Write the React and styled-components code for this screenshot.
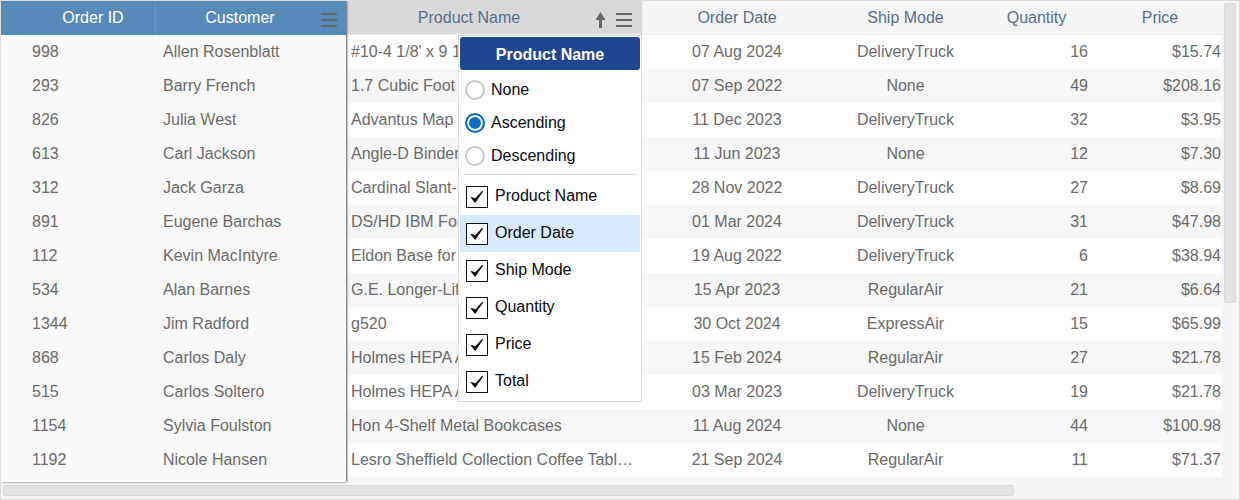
import React from 'react';
import styled, { createGlobalStyle } from 'styled-components';

const GlobalStyle = createGlobalStyle`
  body {
    margin: 0;
    font-family: 'Liberation Sans', Arial, sans-serif;
  }
`;

const Frame = styled.div`
  position: relative;
  box-sizing: border-box;
  width: 1240px;
  height: 500px;
  border: 1px solid #dcdcdc;
  background: #f5f5f5;
  display: flex;
  flex-direction: column;
  overflow: hidden;
  font-size: 16px;
`;

const Body = styled.div`
  display: flex;
  height: 481px;
`;

const FrozenPane = styled.div`
  position: relative;
  z-index: 2;
  width: 345px;
  flex: none;
  background: #fafafa;
  box-shadow: 1px 0 2px rgba(0, 0, 0, 0.65);
`;

const CenterPane = styled.div`
  width: 875px;
  margin-left: 1px;
  flex: none;
  overflow: hidden;
`;

const HeaderRow = styled.div`
  display: flex;
  height: 34px;
  background: ${(p) => (p.$frozen ? '#568ab8' : '#f5f5f5')};
`;

const HeaderCell = styled.div`
  position: relative;
  box-sizing: border-box;
  flex: none;
  width: ${(p) => p.$w}px;
  height: 34px;
  line-height: 33px;
  text-align: center;
  padding-left: ${(p) => p.$pl || 0}px;
  padding-right: ${(p) => p.$pr || 0}px;
  color: ${(p) => (p.$frozen ? '#ffffff' : '#566f91')};
  background: ${(p) => (p.$active ? '#d9d9d9' : 'transparent')};
  border-right: ${(p) => (p.$divider ? '1px solid #6a97c0' : 'none')};
  border-bottom: ${(p) => (p.$frozen ? 'none' : '1px solid #ececec')};
`;

const MenuIcon = styled.span`
  position: absolute;
  right: ${(p) => p.$right}px;
  top: 12px;
  width: 16px;
  height: 14px;
  border-top: 2px solid #666;
  border-bottom: 2px solid #666;
  box-sizing: border-box;
  &::after {
    content: '';
    position: absolute;
    left: 0;
    right: 0;
    top: 4px;
    height: 2px;
    background: #666;
  }
`;

const SortIcon = styled.svg`
  position: absolute;
  right: 36px;
  top: 11px;
  width: 11px;
  height: 16px;
`;

const Row = styled.div`
  display: flex;
  height: 34px;
  background: ${(p) => p.$bg};
`;

const Cell = styled.div`
  box-sizing: border-box;
  flex: none;
  width: ${(p) => p.$w}px;
  line-height: 33px;
  text-align: ${(p) => p.$align || 'left'};
  padding-left: ${(p) => p.$pl || 0}px;
  padding-right: ${(p) => p.$pr || 0}px;
  color: #6b6b6b;
  white-space: nowrap;
  overflow: hidden;
  text-overflow: ellipsis;
`;

const VerticalTrack = styled.div`
  flex: 1;
  padding: 2px 3px 0 2px;
`;

const VerticalThumb = styled.div`
  height: 300px;
  background: #e3e3e3;
  border: 1px solid #d8d8d8;
  border-radius: 2px;
  box-sizing: border-box;
`;

const HorizontalTrack = styled.div`
  flex: 1;
  padding: 3px 2px;
`;

const HorizontalThumb = styled.div`
  width: 1011px;
  height: 11px;
  background: #e3e3e3;
  border: 1px solid #d8d8d8;
  border-radius: 2px;
  box-sizing: border-box;
`;

const Popup = styled.div`
  position: absolute;
  z-index: 3;
  left: 457px;
  top: 34px;
  box-sizing: border-box;
  width: 184px;
  height: 367px;
  background: #ffffff;
  border: 1px solid #dddddd;
  padding: 1px;
  color: #0a0a14;
`;

const PopupTitle = styled.div`
  height: 33px;
  line-height: 35px;
  background: #1f4690;
  border-radius: 3px;
  color: #ffffff;
  font-weight: bold;
  text-align: center;
`;

const RadioList = styled.div`
  padding-top: 3px;
`;

const RadioItem = styled.div`
  display: flex;
  align-items: center;
  height: 33px;
  padding-left: 5px;
`;

const RadioMark = styled.span`
  box-sizing: border-box;
  width: 20px;
  height: 20px;
  margin-right: 6px;
  border-radius: 50%;
  border: 2px solid ${(p) => (p.$on ? '#0a6cc4' : '#c8c8c8')};
  background: ${(p) => (p.$on ? '#0a6cc4' : '#ffffff')};
  box-shadow: ${(p) => (p.$on ? 'inset 0 0 0 2px #ffffff' : 'none')};
`;

const Divider = styled.div`
  height: 1px;
  margin: 2px 3px 3px 3px;
  background: #dddddd;
`;

const CheckItem = styled.div`
  display: flex;
  align-items: center;
  height: 37px;
  padding-left: 6px;
  background: ${(p) => (p.$hover ? '#d8eafb' : 'transparent')};
`;

const CheckBox = styled.span`
  box-sizing: border-box;
  flex: none;
  display: flex;
  align-items: center;
  justify-content: center;
  width: 22px;
  height: 22px;
  margin-top: 1px;
  margin-right: 7px;
  border: 1.5px solid #111;
  background: #ffffff;
`;

const CheckLabel = styled.span`
  margin-top: -2px;
`;

const rows = [
  ['998', 'Allen Rosenblatt', "#10-4 1/8' x 9 1/2' Premium Diagonal Seam Envelopes", '07 Aug 2024', 'DeliveryTruck', 16, '$15.74'],
  ['293', 'Barry French', '1.7 Cubic Foot Compact Office Refrigerators', '07 Sep 2022', 'None', 49, '$208.16'],
  ['826', 'Julia West', 'Advantus Map Pennant Flags and Round Head Tacks', '11 Dec 2023', 'DeliveryTruck', 32, '$3.95'],
  ['613', 'Carl Jackson', 'Angle-D Binders with Locking Rings, Label Holders', '11 Jun 2023', 'None', 12, '$7.30'],
  ['312', 'Jack Garza', 'Cardinal Slant-D Ring Binder, Heavy Gauge Vinyl', '28 Nov 2022', 'DeliveryTruck', 27, '$8.69'],
  ['891', 'Eugene Barchas', 'DS/HD IBM Formatted Diskettes, 200/Pack', '01 Mar 2024', 'DeliveryTruck', 31, '$47.98'],
  ['112', 'Kevin MacIntyre', 'Eldon Base for stackable storage shelf, platinum', '19 Aug 2022', 'DeliveryTruck', 6, '$38.94'],
  ['534', 'Alan Barnes', 'G.E. Longer-Life Indoor Recessed Floodlight Bulbs', '15 Apr 2023', 'RegularAir', 21, '$6.64'],
  ['1344', 'Jim Radford', 'g520', '30 Oct 2024', 'ExpressAir', 15, '$65.99'],
  ['868', 'Carlos Daly', 'Holmes HEPA Air Purifier', '15 Feb 2024', 'RegularAir', 27, '$21.78'],
  ['515', 'Carlos Soltero', 'Holmes HEPA Air Purifier', '03 Mar 2023', 'DeliveryTruck', 19, '$21.78'],
  ['1154', 'Sylvia Foulston', 'Hon 4-Shelf Metal Bookcases', '11 Aug 2024', 'None', 44, '$100.98'],
  ['1192', 'Nicole Hansen', 'Lesro Sheffield Collection Coffee Table, End Table', '21 Sep 2024', 'RegularAir', 11, '$71.37'],
];

const sortOptions = [
  { label: 'None' },
  { label: 'Ascending', on: true },
  { label: 'Descending' },
];

const columnOptions = [
  { label: 'Product Name' },
  { label: 'Order Date', hover: true },
  { label: 'Ship Mode' },
  { label: 'Quantity' },
  { label: 'Price' },
  { label: 'Total' },
];

const Check = () => (
  <svg width="16" height="16" viewBox="0 0 16 16">
    <path d="M2.5 8.5 L6.2 13 L13.5 2.5 L6.4 10 Z" fill="#111" stroke="#111" strokeWidth="1.2" strokeLinejoin="round" />
  </svg>
);

const App = () => {
  return (
    <Frame>
      <GlobalStyle />
      <Body>
        <FrozenPane>
          <HeaderRow $frozen>
            <HeaderCell $frozen $divider $w={155} $pl={30}>Order ID</HeaderCell>
            <HeaderCell $frozen $w={190} $pr={22}>
              Customer
              <MenuIcon $right={9} />
            </HeaderCell>
          </HeaderRow>
          {rows.map((r, index) => (
            <Row key={r[0]} $bg={index % 2 ? '#f9f9f9' : '#fafafa'}>
              <Cell $w={155} $pl={31}>{r[0]}</Cell>
              <Cell $w={190} $pl={7}>{r[1]}</Cell>
            </Row>
          ))}
        </FrozenPane>
        <CenterPane>
          <HeaderRow>
            <HeaderCell $active $w={295} $pr={51}>
              Product Name
              <SortIcon viewBox="0 0 11 16">
                <path d="M5.5 0 L10.5 8 L7 8 L7 16 L4 16 L4 8 L0.5 8 Z" fill="#666" />
              </SortIcon>
              <MenuIcon $right={10} />
            </HeaderCell>
            <HeaderCell $w={184} $pl={6}>Order Date</HeaderCell>
            <HeaderCell $w={159}>Ship Mode</HeaderCell>
            <HeaderCell $w={107} $pr={4}>Quantity</HeaderCell>
            <HeaderCell $w={130} $pl={6}>Price</HeaderCell>
          </HeaderRow>
          {rows.map((r, index) => (
            <Row key={r[0]} $bg={index % 2 ? '#f7f7f7' : '#ffffff'}>
              <Cell $w={295} $pl={4} $pr={9}>{r[2]}</Cell>
              <Cell $w={184} $pl={6} $align="center">{r[3]}</Cell>
              <Cell $w={159} $align="center">{r[4]}</Cell>
              <Cell $w={107} $align="right" $pr={4}>{r[5]}</Cell>
              <Cell $w={130} $align="right" $pr={1}>{r[6]}</Cell>
            </Row>
          ))}
        </CenterPane>
        <VerticalTrack>
          <VerticalThumb />
        </VerticalTrack>
      </Body>
      <HorizontalTrack>
        <HorizontalThumb />
      </HorizontalTrack>
      <Popup>
        <PopupTitle>Product Name</PopupTitle>
        <RadioList>
          {sortOptions.map((o) => (
            <RadioItem key={o.label}>
              <RadioMark $on={o.on} />
              {o.label}
            </RadioItem>
          ))}
        </RadioList>
        <Divider />
        {columnOptions.map((o) => (
          <CheckItem key={o.label} $hover={o.hover}>
            <CheckBox>
              <Check />
            </CheckBox>
            <CheckLabel>{o.label}</CheckLabel>
          </CheckItem>
        ))}
      </Popup>
    </Frame>
  );
};

export default App;
